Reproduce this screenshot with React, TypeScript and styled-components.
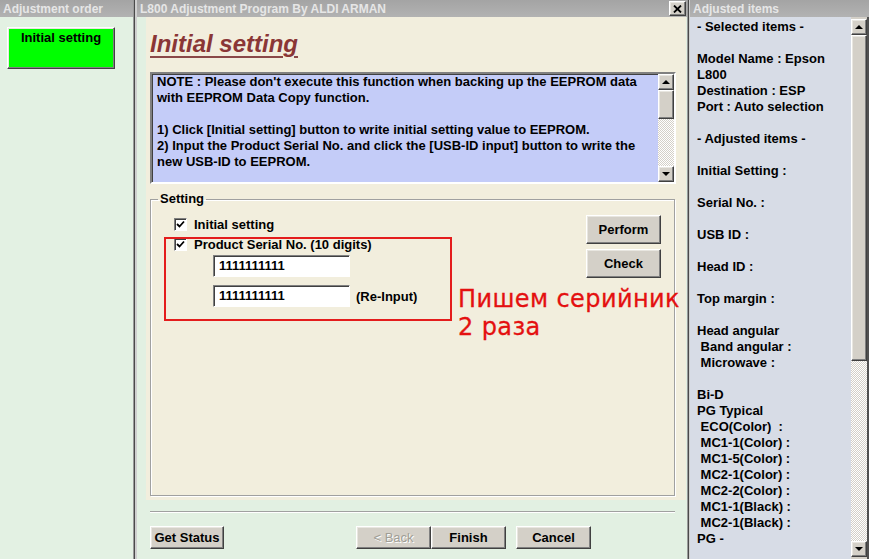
import styled, { createGlobalStyle } from "styled-components"

const GlobalStyle = createGlobalStyle`
    html, body {
        margin: 0;
        padding: 0;
    }
    body {
        font-family: "Liberation Sans", Arial, sans-serif;
        font-size: 13px;
        font-weight: bold;
        color: #000;
        background: #e2f0e2;
    }
`

const Screen = styled.div`
    display: flex;
    width: 869px;
    height: 559px;
    overflow: hidden;
`
const Pane = styled.div<{ $w: number; $bg: string }>`
    display: flex;
    flex-direction: column;
    width: ${p => p.$w}px;
    flex: none;
    background: ${p => p.$bg};
`
const Caption = styled.div`
    height: 17px;
    flex: none;
    display: flex;
    align-items: center;
    justify-content: space-between;
    padding-left: 3px;
    background: linear-gradient(#a4a4a4, #b2b2b2);
    color: #e6e6e6;
    font-size: 12px;
    font-weight: bold;
    white-space: nowrap;
`
const Splitter = styled.div<{ $w: number }>`
    width: ${p => p.$w}px;
    flex: none;
    background: linear-gradient(90deg, #9a9a9a 0 1px, #4a4a4a 1px 2px, #cfcfcf 2px);
`
const raised = `
    border: 1px solid;
    border-color: #ffffff #404040 #404040 #ffffff;
    box-shadow: inset -1px -1px #808080, inset 1px 1px #e8e6e0;
`
const CloseButton = styled.div`
    width: 17px;
    height: 15px;
    margin-right: 1px;
    box-sizing: border-box;
    background: #d4d0c8;
    ${raised}
    display: flex;
    align-items: center;
    justify-content: center;
`

/* left pane */
const OrderBody = styled.div`
    flex: 1;
    padding: 10px 0 0 7px;
`
const OrderButton = styled.div`
    width: 108px;
    height: 42px;
    box-sizing: border-box;
    background: #00ff00;
    ${raised}
    text-align: center;
    line-height: 16px;
    padding-top: 2px;
`

/* middle pane */
const MiddleBody = styled.div`
    flex: 1;
    display: flex;
    flex-direction: column;
`
const Sheet = styled.div`
    height: 483px;
    margin-left: 9px;
    margin-right: 1px;
    padding: 13px 0 0 4px;
    box-sizing: border-box;
    background: #f2eedd;
    display: flex;
    flex-direction: column;
    align-items: flex-start;
`
const PageTitle = styled.div`
    font-size: 24px;
    line-height: 28px;
    font-style: italic;
    font-weight: bold;
    color: #8a3636;
    text-decoration: underline;
    text-decoration-thickness: 2px;
    text-underline-offset: 4px;
    text-decoration-color: #8a4848;
`
const NoteBox = styled.div`
    margin-top: 14px;
    width: 526px;
    height: 112px;
    box-sizing: border-box;
    display: flex;
    background: #c4ccf8;
    border: 2px solid;
    border-color: #808080 #ffffff #ffffff #808080;
    box-shadow: inset 1px 1px #404040;
`
const NoteText = styled.div`
    flex: 1;
    padding-left: 5px;
    line-height: 16px;
    white-space: pre;
`
const ScrollBar = styled.div`
    width: 16px;
    flex: none;
    display: flex;
    flex-direction: column;
`
const ScrollArrow = styled.div`
    height: 16px;
    flex: none;
    box-sizing: border-box;
    background: #d4d0c8;
    ${raised}
    display: flex;
    align-items: center;
    justify-content: center;
`
const Triangle = styled.div<{ $down?: boolean }>`
    width: 0;
    height: 0;
    border-left: 4px solid transparent;
    border-right: 4px solid transparent;
    ${p => (p.$down ? "border-top: 4px solid #000;" : "border-bottom: 4px solid #000;")}
`
const Thumb = styled.div<{ $h: number }>`
    height: ${p => p.$h}px;
    flex: none;
    box-sizing: border-box;
    background: #d4d0c8;
    ${raised}
`
const Track = styled.div`
    flex: 1;
    background: repeating-conic-gradient(#d4d0c8 0 25%, #ffffff 0 50%) 0 0 / 2px 2px;
`

const GroupBox = styled.fieldset`
    position: relative;
    margin: 7px 0 0 0;
    padding: 0;
    width: 525px;
    height: 305px;
    box-sizing: border-box;
    border: 1px solid #a0a0a0;
    box-shadow: 1px 1px #ffffff, inset 1px 1px #ffffff;
    display: flex;
`
const Legend = styled.legend`
    margin-left: 7px;
    padding: 0 2px;
    line-height: 16px;
`
const Options = styled.div`
    flex: 1;
    display: flex;
    flex-direction: column;
    padding: 9px 0 0 23px;
`
const CheckRow = styled.div<{ $gap?: number }>`
    display: flex;
    align-items: center;
    gap: 7px;
    height: 16px;
    margin-top: ${p => p.$gap ?? 0}px;
`
const CheckBox = styled.div`
    width: 13px;
    height: 13px;
    box-sizing: border-box;
    background: #fff;
    border: 1px solid;
    border-color: #808080 #ffffff #ffffff #808080;
    box-shadow: inset 1px 1px #404040;
    display: flex;
    align-items: center;
    justify-content: center;
`
const InputRow = styled.div<{ $gap: number }>`
    display: flex;
    align-items: center;
    gap: 6px;
    margin: ${p => p.$gap}px 0 0 39px;
`
const SerialInput = styled.div`
    width: 137px;
    height: 22px;
    box-sizing: border-box;
    background: #fff;
    border: 1px solid;
    border-color: #808080 #ffffff #ffffff #808080;
    box-shadow: inset 1px 1px #404040;
    padding-left: 5px;
    line-height: 20px;
`
const Actions = styled.div`
    display: flex;
    flex-direction: column;
    gap: 5px;
    padding: 8px 13px 0 0;
`
const Button = styled.div<{ $w: number; $h: number; $disabled?: boolean }>`
    width: ${p => p.$w}px;
    height: ${p => p.$h}px;
    box-sizing: border-box;
    background: #d4d0c8;
    ${raised}
    display: flex;
    align-items: center;
    justify-content: center;
    color: ${p => (p.$disabled ? "#a09e96" : "#000")};
    font-weight: ${p => (p.$disabled ? "normal" : "bold")};
    text-shadow: ${p => (p.$disabled ? "1px 1px #ffffff" : "none")};
`
const RedFrame = styled.div`
    position: absolute;
    left: 13px;
    top: 30px;
    width: 288px;
    height: 84px;
    box-sizing: border-box;
    border: 2px solid #e41c1c;
`
const RedNote = styled.div`
    position: absolute;
    left: 307px;
    top: 78px;
    font-family: "DejaVu Sans", Verdana, sans-serif;
    font-weight: normal;
    font-size: 24px;
    letter-spacing: 0.4px;
    line-height: 28px;
    color: #e41010;
    -webkit-text-stroke: 0.3px #e41010;
    white-space: pre;
`
const Separator = styled.div`
    margin: 11px 0 0 13px;
    width: 525px;
    height: 1px;
    background: #a0a0a0;
    border-bottom: 1px solid #ffffff;
`
const ButtonBar = styled.div`
    display: flex;
    margin: 13px 0 0 13px;
`
const WizardButtons = styled.div`
    display: flex;
    margin-left: 132px;
    gap: 10px;
`
const Pair = styled.div`
    display: flex;
`

/* right pane */
const ItemsBody = styled.div`
    flex: 1;
    display: flex;
    background: #d7dce6;
    border-right: 2px solid #505050;
`
const ItemsText = styled.div`
    flex: 1;
    padding: 2px 0 0 7px;
    line-height: 16px;
    white-space: pre;
    overflow: hidden;
`
const ItemsScroll = styled(ScrollBar)`
    padding: 2px 0;
    background: #d4d0c8;
`

const Check = () => (
    <svg width="9" height="9" viewBox="0 0 9 9">
        <path d="M1 4 L3.5 6.5 L8 1.5" fill="none" stroke="#000" strokeWidth="1.8" />
    </svg>
)

const Scroller = ({ thumb }: { thumb: number }) => (
    <>
        <ScrollArrow><Triangle /></ScrollArrow>
        <Thumb $h={thumb} />
        <Track />
        <ScrollArrow><Triangle $down /></ScrollArrow>
    </>
)

const noteLines = [
    "NOTE : Please don't execute this function when backing up the EEPROM data",
    "with EEPROM Data Copy function.",
    "",
    "1) Click [Initial setting] button to write initial setting value to EEPROM.",
    "2) Input the Product Serial No. and click the [USB-ID input] button to write the",
    "new USB-ID to EEPROM.",
]

const items = [
    "- Selected items -",
    "",
    "Model Name : Epson",
    "L800",
    "Destination : ESP",
    "Port : Auto selection",
    "",
    "- Adjusted items -",
    "",
    "Initial Setting :",
    "",
    "Serial No. :",
    "",
    "USB ID :",
    "",
    "Head ID :",
    "",
    "Top margin :",
    "",
    "Head angular",
    " Band angular :",
    " Microwave :",
    "",
    "Bi-D",
    "PG Typical",
    " ECO(Color)  :",
    " MC1-1(Color) :",
    " MC1-5(Color) :",
    " MC2-1(Color) :",
    " MC2-2(Color) :",
    " MC1-1(Black) :",
    " MC2-1(Black) :",
    "PG -",
]

export default function App() {
    return (
        <>
            <GlobalStyle />
            <Screen>
                <Pane $w={133} $bg="#e3f1e3">
                    <Caption>Adjustment order</Caption>
                    <OrderBody>
                        <OrderButton>Initial setting</OrderButton>
                    </OrderBody>
                </Pane>
                <Splitter $w={4} />
                <Pane $w={550} $bg="#e2f0e2">
                    <Caption>
                        L800 Adjustment Program By ALDI ARMAN
                        <CloseButton>
                            <svg width="9" height="8" viewBox="0 0 9 8">
                                <path d="M1 0.5 L8 7.5 M8 0.5 L1 7.5" stroke="#000" strokeWidth="1.8" />
                            </svg>
                        </CloseButton>
                    </Caption>
                    <MiddleBody>
                        <Sheet>
                            <PageTitle>Initial setting</PageTitle>
                            <NoteBox>
                                <NoteText>{noteLines.join("\n")}</NoteText>
                                <ScrollBar>
                                    <Scroller thumb={29} />
                                </ScrollBar>
                            </NoteBox>
                            <GroupBox>
                                <Legend>Setting</Legend>
                                <Options>
                                    <CheckRow>
                                        <CheckBox><Check /></CheckBox>
                                        Initial setting
                                    </CheckRow>
                                    <CheckRow $gap={4}>
                                        <CheckBox><Check /></CheckBox>
                                        Product Serial No. (10 digits)
                                    </CheckRow>
                                    <InputRow $gap={3}>
                                        <SerialInput>1111111111</SerialInput>
                                    </InputRow>
                                    <InputRow $gap={8}>
                                        <SerialInput>1111111111</SerialInput>
                                        (Re-Input)
                                    </InputRow>
                                </Options>
                                <Actions>
                                    <Button $w={75} $h={29}>Perform</Button>
                                    <Button $w={75} $h={29}>Check</Button>
                                </Actions>
                                <RedFrame />
                                <RedNote>{"Пишем серийник\n2 раза"}</RedNote>
                            </GroupBox>
                        </Sheet>
                        <Separator />
                        <ButtonBar>
                            <Button $w={74} $h={23}>Get Status</Button>
                            <WizardButtons>
                                <Pair>
                                    <Button $w={75} $h={23} $disabled>&lt; Back</Button>
                                    <Button $w={75} $h={23}>Finish</Button>
                                </Pair>
                                <Button $w={75} $h={23}>Cancel</Button>
                            </WizardButtons>
                        </ButtonBar>
                    </MiddleBody>
                </Pane>
                <Splitter $w={3} />
                <Pane $w={179} $bg="#d7dce6">
                    <Caption>Adjusted items</Caption>
                    <ItemsBody>
                        <ItemsText>{items.join("\n")}</ItemsText>
                        <ItemsScroll>
                            <Scroller thumb={326} />
                        </ItemsScroll>
                    </ItemsBody>
                </Pane>
            </Screen>
        </>
    )
}
